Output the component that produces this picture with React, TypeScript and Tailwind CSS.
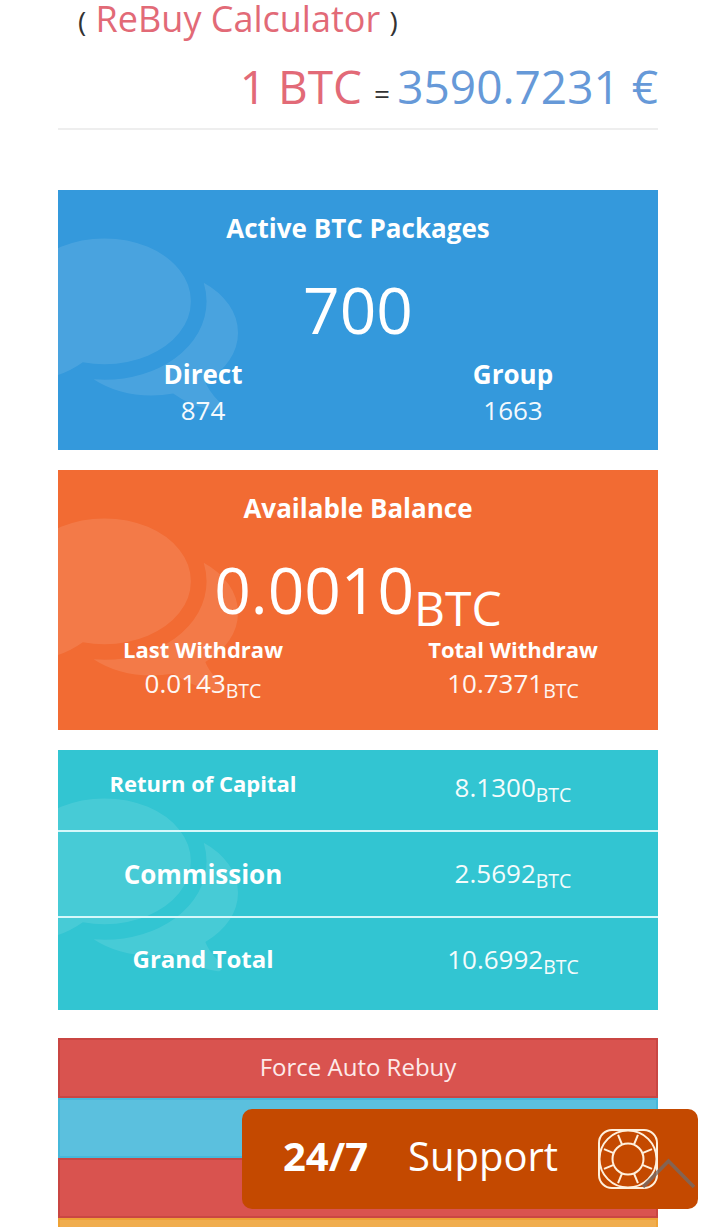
import type { ReactNode } from "react";

function CommentsIcon() {
  return (
    <svg
      viewBox="0 0 1792 1792"
      className="pointer-events-none absolute top-[17px] -left-10 size-[220px] fill-white opacity-10"
    >
      <path d="M1408 768q0 139-94 257t-256.500 186.500-353.500 68.500q-86 0-176-16-124 88-278 128-36 9-86 16h-3q-11 0-20.500-8t-11.500-21q-1-3-1-6.500t.5-6.500 2-6l2.500-5 3.500-5.500 4-5 4.500-5 4-4.500q5-6 23-25t26-29.500 22.500-29 25-38.500 20.500-44q-124-72-195-177t-71-224q0-139 94-257t256.500-186.500 353.500-68.500 353.500 68.500 256.500 186.500 94 257zm384 256q0 120-71 224.500t-195 176.500q10 24 20.500 44t25 38.500 22.500 29 26 29.500 23 25q1 1 4 4.500t4.500 5 4 5 3.500 5.500l2.500 5 2 6 .5 6.500-1 6.500q-3 14-13 22t-22 7q-50-7-86-16-154-40-278-128-90 16-176 16-271 0-472-132 58 4 88 4 161 0 309-45t264-129q125-92 192-212t67-254q0-77-23-152 129 71 204 178t75 230z" />
    </svg>
  );
}

function Card({ color, children }: { color: string; children: ReactNode }) {
  return (
    <section className={`relative h-[260px] overflow-hidden text-center text-white ${color}`}>
      <CommentsIcon />
      <div className="relative">{children}</div>
    </section>
  );
}

function Value({ amount, unit }: { amount: string; unit?: boolean }) {
  return (
    <div className="h-9 text-[26px] leading-9 opacity-95">
      {amount}
      {unit && <sub>BTC</sub>}
    </div>
  );
}

function LifeRing() {
  return (
    <svg viewBox="0 0 60 60" className="size-[60px]" fill="none" stroke="#fff0dc" strokeWidth="2">
      <rect x="1" y="1" width="58" height="58" rx="13" />
      <circle cx="30" cy="30" r="28.500" />
      <circle cx="30" cy="30" r="15.500" />
      {[22.5, 67.5, 112.5, 157.5, 202.5, 247.5, 292.5, 337.5].map((a) => (
        <path key={a} d="M45.500 30H56" transform={`rotate(${a} 30 30)`} />
      ))}
    </svg>
  );
}

export default function App() {
  return (
    <div className="relative h-[1227px] w-[717px] overflow-hidden bg-white font-['Open_Sans',sans-serif] text-[#333]">
      <main className="ml-[58px] w-[600px]">
        <header className="h-[130px] border-b-2 border-[#eee] text-[28px]">
          <div className="h-[51px] pl-5 leading-[37px] whitespace-nowrap">
            (<span className="text-[36px] text-[#e26a77]">{" ReBuy Calculator "}</span>)
          </div>
          <div className="h-[70px] text-right leading-[70px] whitespace-nowrap">
            <span className="text-[46px] text-[#e26a77]">{"1 BTC "}</span>={" "}
            <span className="text-[46px] text-[#6699d8]">3590.7231 €</span>
          </div>
        </header>

        <div className="mt-[60px] flex flex-col gap-5">
          <Card color="bg-[#3499dc]">
            <h2 className="mt-5 h-9 text-[26px] leading-9 font-bold">Active BTC Packages</h2>
            <div className="mt-5 h-[88px] text-[64px] leading-[88px]">700</div>
            <div className="mt-0.5 grid grid-cols-2 gap-5">
              <div>
                <h3 className="h-9 text-[26px] leading-9 font-bold">Direct</h3>
                <Value amount="874" />
              </div>
              <div>
                <h3 className="h-9 text-[26px] leading-9 font-bold">Group</h3>
                <Value amount="1663" />
              </div>
            </div>
          </Card>

          <Card color="bg-[#f26b33]">
            <h2 className="mt-5 h-9 text-[26px] leading-9 font-bold">Available Balance</h2>
            <div className="mt-5 h-[88px] text-[64px] leading-[88px]">
              0.0010<sub>BTC</sub>
            </div>
            <div className="grid grid-cols-2 gap-5">
              <div>
                <h3 className="mb-px h-[30px] text-[22px] leading-[30px] font-bold">Last Withdraw</h3>
                <Value amount="0.0143" unit />
              </div>
              <div>
                <h3 className="mb-px h-[30px] text-[22px] leading-[30px] font-bold">Total Withdraw</h3>
                <Value amount="10.7371" unit />
              </div>
            </div>
          </Card>

          <Card color="bg-[#32c5d2]">
            <div className="grid h-[82px] grid-cols-2 gap-5 border-b-2 border-[#d6f8fa]">
              <h3 className="pt-[18px] text-[22px] leading-[30px] font-bold">Return of Capital</h3>
              <div className="pt-[19px]"><Value amount="8.1300" unit /></div>
            </div>
            <div className="grid h-[86px] grid-cols-2 gap-5 border-b-2 border-[#d6f8fa]">
              <h3 className="pt-6 text-[26px] leading-9 font-bold">Commission</h3>
              <div className="pt-[23px]"><Value amount="2.5692" unit /></div>
            </div>
            <div className="grid grid-cols-2 gap-5">
              <h3 className="pt-[23px] text-2xl leading-9 font-bold">Grand Total</h3>
              <div className="pt-[23px]"><Value amount="10.6992" unit /></div>
            </div>
          </Card>
        </div>

        <div className="mt-7 flex flex-col text-2xl">
          <button className="h-[60px] border-2 border-[#c94643] bg-[#d9534f] pb-0.5 text-[#fdeaea]">
            Force Auto Rebuy
          </button>
          <div className="h-[60px] border-2 border-[#46b8da] bg-[#5bc0de]" />
          <div className="h-[60px] border-2 border-[#c94643] bg-[#d9534f]" />
          <div className="h-[60px] border-2 border-[#eea236] bg-[#f0ad4e]" />
        </div>
      </main>

      <aside className="absolute top-[1109px] left-[242px] flex h-[100px] w-[456px] rounded-[10px] bg-[#c44900] pt-5 pl-[41px] text-[40px] leading-[54px] text-white">
        <b className="w-[125px]">24/7</b>
        <span className="w-[190px]">Support</span>
        <LifeRing />
      </aside>
      <svg
        viewBox="0 0 56 32"
        className="absolute top-[1157px] left-[641px] h-8 w-14"
        fill="none"
        stroke="#746a66"
        strokeOpacity="0.8"
        strokeWidth="3.500"
      >
        <path d="M2 30L27.500 4L53 30" />
      </svg>
    </div>
  );
}
